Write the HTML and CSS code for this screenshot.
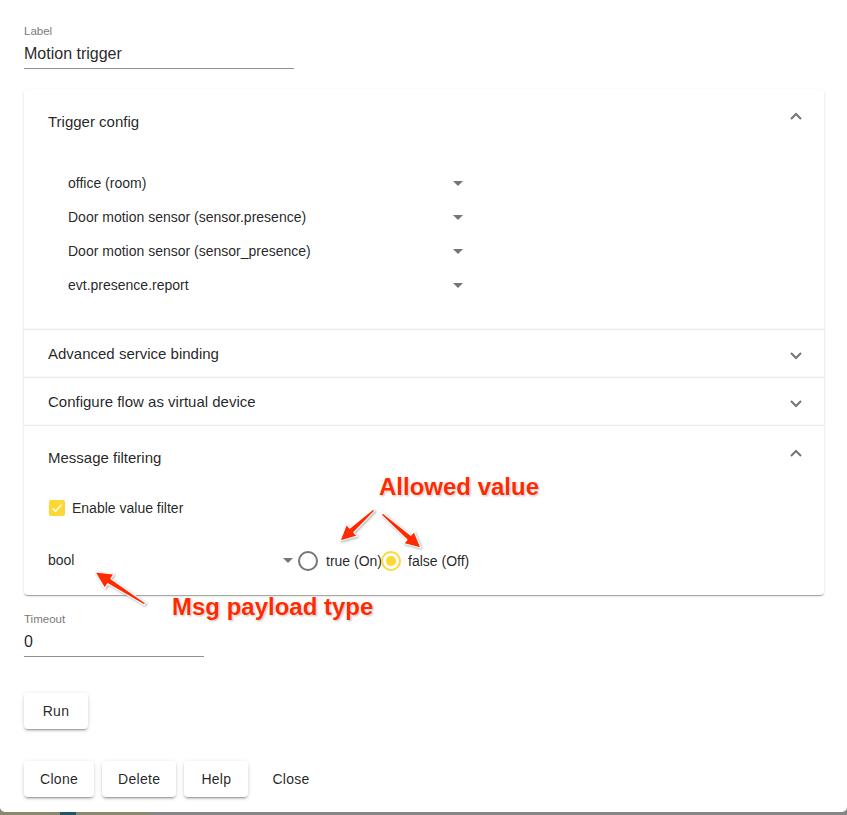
FILE: index.html
```html
<!DOCTYPE html>
<html lang="en">
<head>
<meta charset="utf-8">
<title>Motion trigger</title>
<link rel="stylesheet" href="styles.css">
</head>
<body>
<div class="page">
  <div class="field field-label">
    <div class="field-caption">Label</div>
    <div class="field-input">Motion trigger</div>
  </div>

  <div class="accordion">
    <section class="panel">
      <div class="summary summary-open">
        <span class="summary-title">Trigger config</span>
        <svg class="chev chev-up" width="12" height="8" viewBox="0 0 12 8"><path d="M1 7 L6 2 L11 7" fill="none" stroke="#757575" stroke-width="2"/></svg>
      </div>
      <div class="details details-trigger">
        <div class="select wide"><span>office (room)</span><svg class="caret" width="10" height="5" viewBox="0 0 10 5"><path d="M0 0 L5 5 L10 0z" fill="#757575"/></svg></div>
        <div class="select wide"><span>Door motion sensor (sensor.presence)</span><svg class="caret" width="10" height="5" viewBox="0 0 10 5"><path d="M0 0 L5 5 L10 0z" fill="#757575"/></svg></div>
        <div class="select wide"><span>Door motion sensor (sensor_presence)</span><svg class="caret" width="10" height="5" viewBox="0 0 10 5"><path d="M0 0 L5 5 L10 0z" fill="#757575"/></svg></div>
        <div class="select wide"><span>evt.presence.report</span><svg class="caret" width="10" height="5" viewBox="0 0 10 5"><path d="M0 0 L5 5 L10 0z" fill="#757575"/></svg></div>
      </div>
    </section>
    <section class="panel">
      <div class="summary summary-closed">
        <span class="summary-title">Advanced service binding</span>
        <svg class="chev chev-down" width="12" height="8" viewBox="0 0 12 8"><path d="M1 1 L6 6 L11 1" fill="none" stroke="#757575" stroke-width="2"/></svg>
      </div>
    </section>
    <section class="panel">
      <div class="summary summary-closed">
        <span class="summary-title">Configure flow as virtual device</span>
        <svg class="chev chev-down" width="12" height="8" viewBox="0 0 12 8"><path d="M1 1 L6 6 L11 1" fill="none" stroke="#757575" stroke-width="2"/></svg>
      </div>
    </section>
    <section class="panel">
      <div class="summary summary-open">
        <span class="summary-title">Message filtering</span>
        <svg class="chev chev-up" width="12" height="8" viewBox="0 0 12 8"><path d="M1 7 L6 2 L11 7" fill="none" stroke="#757575" stroke-width="2"/></svg>
      </div>
      <div class="details details-filter">
        <label class="check-row">
          <span class="checkbox"><svg width="16" height="16" viewBox="0 0 16 16"><path d="M3.5 8.2 L6.6 11.2 L12.6 4.6" fill="none" stroke="#ffffff" stroke-width="1.4"/></svg></span>
          <span>Enable value filter</span>
        </label>
        <div class="value-row">
          <div class="select narrow"><span>bool</span><svg class="caret" width="10" height="5" viewBox="0 0 10 5"><path d="M0 0 L5 5 L10 0z" fill="#757575"/></svg></div>
          <div class="radio-group">
            <span class="radio"></span><span class="radio-text">true (On)</span>
            <span class="radio radio-on"><span class="radio-dot"></span></span><span class="radio-text">false (Off)</span>
          </div>
        </div>
      </div>
    </section>
  </div>

  <div class="field field-timeout">
    <div class="field-caption">Timeout</div>
    <div class="field-input">0</div>
  </div>

  <div class="run-row">
    <button class="btn">Run</button>
  </div>

  <div class="actions">
    <button class="btn">Clone</button>
    <button class="btn">Delete</button>
    <button class="btn">Help</button>
    <button class="btn btn-text">Close</button>
  </div>

  <div class="note note-allowed">Allowed value</div>
  <div class="note note-payload">Msg payload type</div>
  <svg class="arrows" width="847" height="812" viewBox="0 0 847 812">
    <g fill="#ff2a00" stroke="#ffffff" stroke-width="1.2" stroke-linejoin="round">
      <polygon points="374.8,510.9 353.8,532.4 357.2,536.1 340,541 346.4,524.3 349.8,528.0 373.2,509.1"/>
      <polygon points="381.2,514.9 406.9,539.8 403.6,543.5 421,548 414.2,531.5 410.9,535.2 382.8,513.1"/>
      <polygon points="145.7,602.9 110.9,578.7 113.9,574.0 95,572 104.7,588.4 107.7,583.7 144.3,605.1"/>
    </g>
  </svg>
</div>
</body>
</html>
```

FILE: styles.css
```css
html, body {
  margin: 0;
  padding: 0;
  height: 815px;
  overflow: hidden;
}

body {
  background: linear-gradient(to right, #8a8970 0, #8a8970 60px, #1e5668 60px, #1e5668 76px, #8a8970 76px, #8a8970 150px, #878787 150px);
  font-family: "Liberation Sans", Arial, Helvetica, sans-serif;
  color: rgba(0, 0, 0, 0.87);
}

.page {
  position: relative;
  box-sizing: border-box;
  height: 812px;
  background: #ffffff;
  border-radius: 0 0 5px 5px;
  padding: 24px 23px 0 24px;
  display: flex;
  flex-direction: column;
}

/* text fields */
.field {
  display: flex;
  flex-direction: column;
}

.field-caption {
  font-size: 11.5px;
  line-height: 14px;
  color: #7a7a7a;
}

.field-input {
  margin-top: 6px;
  font-size: 16px;
  line-height: 20px;
  padding-bottom: 4px;
  border-bottom: 1px solid #8f8f8f;
}

.field-label {
  width: 270px;
}

.field-timeout {
  width: 180px;
  margin-top: 17px;
}

/* accordion */
.accordion {
  margin-top: 20px;
  display: flex;
  flex-direction: column;
}

.panel {
  background: #ffffff;
  box-shadow: 0 2px 1px -1px rgba(0, 0, 0, 0.2), 0 1px 1px 0 rgba(0, 0, 0, 0.14), 0 1px 3px 0 rgba(0, 0, 0, 0.12);
}

.panel + .panel {
  border-top: 1px solid rgba(0, 0, 0, 0.09);
}

.panel:first-child {
  border-radius: 4px 4px 0 0;
}

.panel:last-child {
  border-radius: 0 0 4px 4px;
}

.summary {
  display: flex;
  align-items: center;
  justify-content: space-between;
  padding: 0 22px 0 24px;
  font-size: 15px;
}

.summary-open {
  height: 63px;
}

.panel:first-child .summary-open {
  height: 64px;
}

.summary-closed {
  height: 47px;
}

.chev-up {
  position: relative;
  top: -5px;
}

.chev-down {
  position: relative;
  top: 2px;
}

.details {
  padding: 0 24px;
  font-size: 14px;
}

.details-trigger {
  padding: 13px 24px 27px 44px;
}

.select {
  display: flex;
  align-items: center;
  justify-content: space-between;
  box-sizing: border-box;
  font-size: 14px;
}

.select .caret {
  margin-right: 7px;
}

.select.wide {
  width: 402px;
  height: 34px;
}

.select.narrow {
  width: 252px;
  height: 40px;
}

.details-filter {
  padding: 5px 24px 15px 24px;
}

.check-row {
  display: flex;
  align-items: center;
  height: 28px;
}

.checkbox {
  width: 16px;
  height: 16px;
  margin-left: 1px;
  margin-right: 7px;
  border-radius: 2px;
  background: #fdd835;
  display: flex;
}

.value-row {
  margin-top: 18px;
  display: flex;
  align-items: center;
  height: 40px;
}

.radio-group {
  display: flex;
  align-items: center;
  margin-left: -2px;
  position: relative;
  top: 1px;
}

.radio {
  box-sizing: border-box;
  width: 20px;
  height: 20px;
  border: 2px solid #757575;
  border-radius: 50%;
  margin-right: 8px;
  display: flex;
  align-items: center;
  justify-content: center;
}

.radio-on {
  border-color: #fdd835;
  margin-left: -1px;
  margin-right: 7px;
}

.radio-dot {
  width: 10px;
  height: 10px;
  border-radius: 50%;
  background: #fdd835;
}

.radio-text {
  font-size: 14px;
}

/* buttons */
.run-row {
  margin-top: 36px;
  display: flex;
}

.actions {
  margin-top: 32px;
  display: flex;
  gap: 8px;
}

.btn {
  font-family: "Liberation Sans", Arial, Helvetica, sans-serif;
  font-size: 14px;
  letter-spacing: 0.3px;
  color: rgba(0, 0, 0, 0.87);
  background: #ffffff;
  border: none;
  border-radius: 4px;
  height: 36px;
  min-width: 64px;
  padding: 0 16px;
  box-shadow: 0 3px 1px -2px rgba(0, 0, 0, 0.2), 0 2px 2px 0 rgba(0, 0, 0, 0.14), 0 1px 5px 0 rgba(0, 0, 0, 0.12);
}

.btn-text {
  box-shadow: none;
  background: transparent;
}

/* annotations */
.note {
  position: absolute;
  font-size: 24px;
  font-weight: bold;
  line-height: 26px;
  color: #ff2a00;
  text-shadow: 0 0 2px #ffffff, 0 0 2px #ffffff, 1px 1px 2px rgba(0, 0, 0, 0.35);
  white-space: nowrap;
}

.note-allowed {
  left: 379px;
  top: 474px;
}

.note-payload {
  left: 172px;
  top: 594px;
}

.arrows {
  position: absolute;
  left: 0;
  top: 0;
  pointer-events: none;
  filter: drop-shadow(1px 1px 1px rgba(0, 0, 0, 0.3));
}
```
